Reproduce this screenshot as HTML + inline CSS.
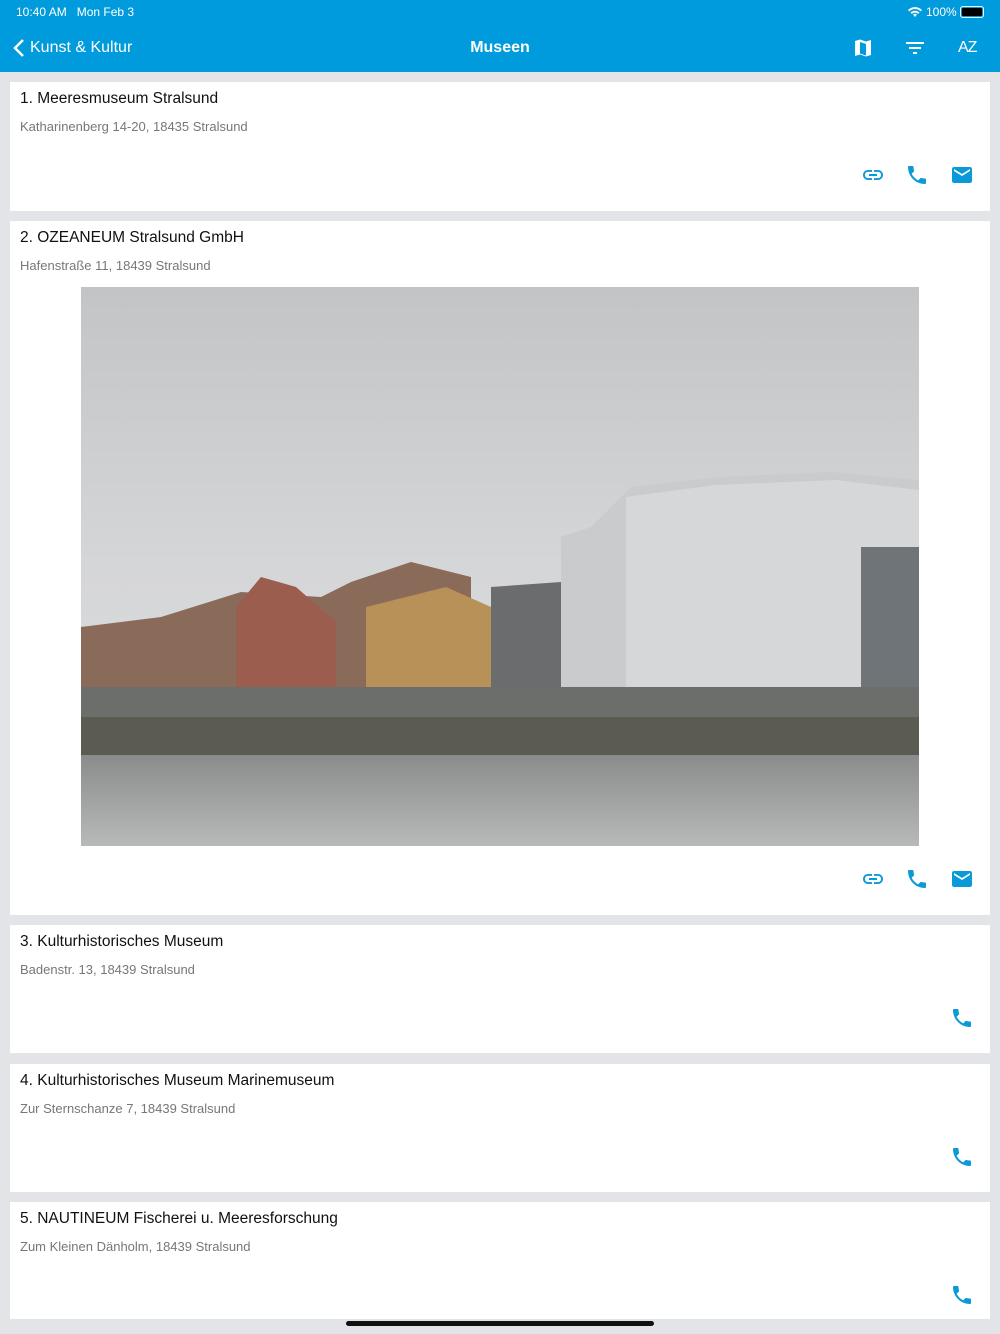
<!DOCTYPE html>
<html><head><meta charset="utf-8"><style>
*{margin:0;padding:0;box-sizing:border-box}
body{width:1000px;height:1334px;background:#e3e4e8;font-family:"Liberation Sans",sans-serif;position:relative;overflow:hidden}
.nav{position:absolute;left:0;top:0;width:1000px;height:72px;background:#009bdc;color:#fff}
.sb{position:absolute;top:5px;font-size:12px}
.card{position:absolute;left:10px;width:980px;background:#fff}
.t{position:absolute;left:10px;top:8px;font-size:15.5px;color:#111}
.a{position:absolute;left:10px;top:37px;font-size:13px;color:#777}
.ic{position:absolute;width:24px;height:24px;fill:#0a9ad8}
</style></head><body>
<div class="nav">
<div class="sb" style="left:16px">10:40 AM&nbsp;&nbsp; Mon Feb 3</div>
<div class="sb" style="left:926px">100%</div>
<svg style="position:absolute;left:907px;top:6px" width="16" height="12" viewBox="0 0 16 12"><path d="M8 11l2-2.5a3 3 0 0 0-4 0zM3.5 6.5l1.3 1.4a4.5 4.5 0 0 1 6.4 0l1.3-1.4a6.5 6.5 0 0 0-9 0zM1 4l1.3 1.4a8 8 0 0 1 11.4 0L15 4A10 10 0 0 0 1 4z" fill="#fff"/></svg>
<div style="position:absolute;left:960px;top:6px;width:24px;height:12px;border:1px solid #fff;border-radius:3px;padding:1px"><div style="background:#000;width:100%;height:100%;border-radius:1px"></div></div>
<svg style="position:absolute;left:12px;top:38px" width="14" height="20" viewBox="0 0 14 20"><path d="M11 2L3 10l8 8" stroke="#fff" stroke-width="2.5" fill="none"/></svg>
<div style="position:absolute;left:30px;top:39px;font-size:16px">Kunst &amp; Kultur</div>
<div style="position:absolute;left:0;width:1000px;text-align:center;top:39px;font-size:16px;font-weight:bold">Museen</div>
<svg style="position:absolute;left:853px;top:38px" width="20" height="20" viewBox="0 0 20 20"><path d="M2 3l5-1.5 6 2 5-1.5v15l-5 1.5-6-2-5 1.5zM7 4v11.5l6 2V6z" fill="#fff" fill-rule="evenodd"/></svg>
<svg style="position:absolute;left:905px;top:39px" width="20" height="18" viewBox="0 0 20 18"><path d="M1 3h18v2H1zM4 8h12v2H4zM8 13h4v2H8z" fill="#fff"/></svg>
<div style="position:absolute;left:958px;top:39px;font-size:16px;letter-spacing:-1px">AZ</div>
</div>

<div class="card" style="top:82px;height:129px"><div class="t">1. Meeresmuseum Stralsund</div><div class="a">Katharinenberg 14-20, 18435 Stralsund</div>
<svg class="ic" style="left:851px;top:81px" viewBox="0 0 24 24"><path d="M3.9 12c0-1.71 1.39-3.1 3.1-3.1h4V7H7c-2.76 0-5 2.24-5 5s2.24 5 5 5h4v-1.9H7c-1.71 0-3.1-1.39-3.1-3.1zM8 13h8v-2H8v2zm9-6h-4v1.9h4c1.71 0 3.1 1.39 3.1 3.1s-1.39 3.1-3.1 3.1h-4V17h4c2.76 0 5-2.24 5-5s-2.24-5-5-5z"/></svg>
<svg class="ic" style="left:895px;top:81px" viewBox="0 0 24 24"><path d="M6.62 10.79c1.44 2.83 3.76 5.14 6.59 6.59l2.2-2.2c.27-.27.67-.36 1.02-.24 1.12.37 2.33.57 3.57.57.55 0 1 .45 1 1V20c0 .55-.45 1-1 1-9.39 0-17-7.61-17-17 0-.55.45-1 1-1h3.5c.55 0 1 .45 1 1 0 1.25.2 2.45.57 3.57.11.35.03.74-.25 1.02l-2.2 2.2z"/></svg>
<svg class="ic" style="left:940px;top:81px" viewBox="0 0 24 24"><path d="M20 4H4c-1.1 0-2 .9-2 2v12c0 1.1.9 2 2 2h16c1.1 0 2-.9 2-2V6c0-1.1-.9-2-2-2zm0 4l-8 5-8-5V6l8 5 8-5v2z"/></svg>
</div>

<div class="card" style="top:221px;height:694px"><div class="t">2. OZEANEUM Stralsund GmbH</div><div class="a">Hafenstraße 11, 18439 Stralsund</div>
<svg style="position:absolute;left:71px;top:66px" width="838" height="559" viewBox="0 0 838 559">
<defs><linearGradient id="s" x1="0" y1="0" x2="0" y2="1"><stop offset="0" stop-color="#c3c4c6"/><stop offset=".5" stop-color="#d5d6d8"/><stop offset="1" stop-color="#dedee0"/></linearGradient>
<linearGradient id="w" x1="0" y1="0" x2="0" y2="1"><stop offset="0" stop-color="#8a8c8c"/><stop offset="1" stop-color="#b8b9b9"/></linearGradient></defs>
<rect width="838" height="559" fill="url(#s)"/>
<path d="M480 420V250l30-10 40-40 90-10 110-5 88 8v227z" fill="#c9cbcd"/>
<path d="M545 210l90-12 120-5 83 10v200H545z" fill="#d6d7d9"/>
<path d="M780 260h58v150h-58z" fill="#6f7478"/>
<path d="M0 340l80-10 80-25 80 5 30-15 60-20 60 15v140H0z" fill="#8a6b5a"/>
<path d="M155 320l25-30 35 10 40 35v90H155z" fill="#9b5d4d"/>
<path d="M285 320l80-20 45 20v100H285z" fill="#b89158"/>
<path d="M410 300l70-5v120h-70z" fill="#6a6c6e"/>
<path d="M0 400h838v30H0z" fill="#6b6e6a"/>
<path d="M0 430h838v40H0z" fill="#5c5b52"/>
<rect y="468" width="838" height="91" fill="url(#w)"/>
</svg>
<svg class="ic" style="left:851px;top:646px" viewBox="0 0 24 24"><path d="M3.9 12c0-1.71 1.39-3.1 3.1-3.1h4V7H7c-2.76 0-5 2.24-5 5s2.24 5 5 5h4v-1.9H7c-1.71 0-3.1-1.39-3.1-3.1zM8 13h8v-2H8v2zm9-6h-4v1.9h4c1.71 0 3.1 1.39 3.1 3.1s-1.39 3.1-3.1 3.1h-4V17h4c2.76 0 5-2.24 5-5s-2.24-5-5-5z"/></svg>
<svg class="ic" style="left:895px;top:646px" viewBox="0 0 24 24"><path d="M6.62 10.79c1.44 2.83 3.76 5.14 6.59 6.59l2.2-2.2c.27-.27.67-.36 1.02-.24 1.12.37 2.33.57 3.57.57.55 0 1 .45 1 1V20c0 .55-.45 1-1 1-9.39 0-17-7.61-17-17 0-.55.45-1 1-1h3.5c.55 0 1 .45 1 1 0 1.25.2 2.45.57 3.57.11.35.03.74-.25 1.02l-2.2 2.2z"/></svg>
<svg class="ic" style="left:940px;top:646px" viewBox="0 0 24 24"><path d="M20 4H4c-1.1 0-2 .9-2 2v12c0 1.1.9 2 2 2h16c1.1 0 2-.9 2-2V6c0-1.1-.9-2-2-2zm0 4l-8 5-8-5V6l8 5 8-5v2z"/></svg>
</div>

<div class="card" style="top:925px;height:128px"><div class="t">3. Kulturhistorisches Museum</div><div class="a">Badenstr. 13, 18439 Stralsund</div>
<svg class="ic" style="left:940px;top:81px" viewBox="0 0 24 24"><path d="M6.62 10.79c1.44 2.83 3.76 5.14 6.59 6.59l2.2-2.2c.27-.27.67-.36 1.02-.24 1.12.37 2.33.57 3.57.57.55 0 1 .45 1 1V20c0 .55-.45 1-1 1-9.39 0-17-7.61-17-17 0-.55.45-1 1-1h3.5c.55 0 1 .45 1 1 0 1.25.2 2.45.57 3.57.11.35.03.74-.25 1.02l-2.2 2.2z"/></svg></div>

<div class="card" style="top:1064px;height:128px"><div class="t">4. Kulturhistorisches Museum Marinemuseum</div><div class="a">Zur Sternschanze 7, 18439 Stralsund</div>
<svg class="ic" style="left:940px;top:81px" viewBox="0 0 24 24"><path d="M6.62 10.79c1.44 2.83 3.76 5.14 6.59 6.59l2.2-2.2c.27-.27.67-.36 1.02-.24 1.12.37 2.33.57 3.57.57.55 0 1 .45 1 1V20c0 .55-.45 1-1 1-9.39 0-17-7.61-17-17 0-.55.45-1 1-1h3.5c.55 0 1 .45 1 1 0 1.25.2 2.45.57 3.57.11.35.03.74-.25 1.02l-2.2 2.2z"/></svg></div>

<div class="card" style="top:1202px;height:117px"><div class="t">5. NAUTINEUM Fischerei u. Meeresforschung</div><div class="a">Zum Kleinen Dänholm, 18439 Stralsund</div>
<svg class="ic" style="left:940px;top:81px" viewBox="0 0 24 24"><path d="M6.62 10.79c1.44 2.83 3.76 5.14 6.59 6.59l2.2-2.2c.27-.27.67-.36 1.02-.24 1.12.37 2.33.57 3.57.57.55 0 1 .45 1 1V20c0 .55-.45 1-1 1-9.39 0-17-7.61-17-17 0-.55.45-1 1-1h3.5c.55 0 1 .45 1 1 0 1.25.2 2.45.57 3.57.11.35.03.74-.25 1.02l-2.2 2.2z"/></svg></div>

<div style="position:absolute;left:346px;top:1321px;width:308px;height:5px;border-radius:3px;background:#111"></div>
</body></html>
